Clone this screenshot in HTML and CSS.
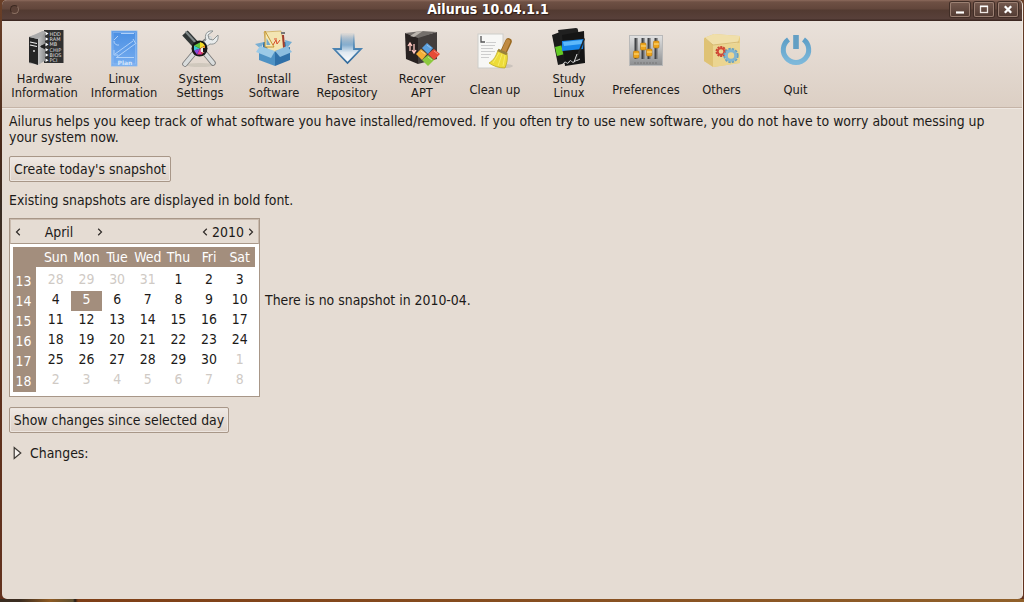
FILE: index.html
```html
<!DOCTYPE html>
<html lang="en">
<head>
<meta charset="utf-8">
<title>Ailurus 10.04.1.1</title>
<link rel="stylesheet" href="styles.css">
</head>
<body>
<main class="window">
  <header class="titlebar">
    <span class="knob"></span>
    <h1 class="title">Ailurus 10.04.1.1</h1>
    <div class="controls">
      <span class="control"><svg width="20" height="15"><path d="M6 10.500h8" stroke="#fff" stroke-width="2.200"/></svg></span>
      <span class="control"><svg width="20" height="15"><rect x="6.500" y="4.500" width="7" height="6" fill="none" stroke="#eee8e4" stroke-width="1.300"/><path d="M6 4.300h8" stroke="#fff" stroke-width="1.500"/></svg></span>
      <span class="control"><svg width="20" height="15"><path d="M6.800 4.300l6.400 6.400M13.200 4.300l-6.400 6.400" stroke="#fff" stroke-width="2.300"/></svg></span>
    </div>
  </header>
  <nav class="toolbar">
    <div class="tool">
      <svg class="icon" viewBox="0 0 40 42">
        <defs><linearGradient id="tower" x2="1"><stop stop-color="#777"/><stop offset=".35" stop-color="#ddd"/><stop offset="1" stop-color="#888"/></linearGradient></defs>
        <rect x="19" y="2" width="19.500" height="33" fill="#303030"/>
        <path d="M4 9l14-6 3 1v28l-8 5-9-2z" fill="url(#tower)"/>
        <path d="M4 9l9 2v26l-9-3z" fill="#252525"/><path d="M4 9l14-6 3 1-8 7z" fill="#aaa"/>
        <path d="M5 14l7 1.500M5 17l7 1.500" stroke="#eee" stroke-width="1.200"/><circle cx="9" cy="23" r="1" fill="#ddd"/>
        <path d="M21 5v28M16 18.500h6" stroke="#333" stroke-width="2"/><path d="M15 18.500l5-3v6z" fill="#222"/>
        <path d="M20.500 3.800l3 1.800-3 1.800zM20.500 9.200l3 1.800-3 1.800zM20.500 14.600l3 1.800-3 1.800zM20.500 20l3 1.800-3 1.800zM20.500 25.200l3 1.800-3 1.800zM20.500 30.500l3 1.800-3 1.800z" fill="#fff"/>
        <g class="parts"><text x="24.500" y="7.600">HDD</text><text x="24.500" y="13">RAM</text><text x="24.500" y="18.400">MB</text><text x="24.500" y="23.800">CHIP</text><text x="24.500" y="29">BIOS</text><text x="24.500" y="34.300">PCI</text></g>
      </svg>
      <span class="label">Hardware<br>Information</span>
    </div>
    <div class="tool">
      <svg class="icon" viewBox="0 0 40 42">
        <defs><linearGradient id="blueprint" x2="0" y2="1"><stop stop-color="#4a8fe3"/><stop offset="1" stop-color="#77adf0"/></linearGradient></defs>
        <rect x="7.500" y="3" width="25.500" height="35" fill="url(#blueprint)" stroke="#8bbaf0" stroke-width=".8"/>
        <g fill="none" stroke="#b9d7fa" stroke-width=".9"><path d="M17 5.500h13M10 12l4-4M10 13a4 4 0 0 0 5 4M11 26l18-13M13 29l18-13M10 22v5h4M29 11l3 5M12 29.500h18"/><rect x="9" y="4.500" width="22.500" height="31.500" stroke-opacity=".4"/></g>
        <text class="proof" x="13.500" y="36.500">Plan</text>
      </svg>
      <span class="label">Linux<br>Information</span>
    </div>
    <div class="tool">
      <svg class="icon" viewBox="0 0 40 42">
        <ellipse cx="20" cy="37" rx="14" ry="2" fill="#998" opacity=".25"/>
        <path d="M5 36L15 24M25 14l4-3" stroke="#777" stroke-width="5.500" stroke-linecap="round"/><path d="M5 36L15 24M25 15l5-5" stroke="#d9dcdc" stroke-width="4" stroke-linecap="round"/>
        <path d="M33 3c-6-1-9 4-7 9l-4 3 4 4 4-3c5 1 9-3 8-9l-5 5-4-1-1-4z" fill="#e9ecec" stroke="#858a8a" stroke-width=".9"/>
        <path d="M24 24l9 11" stroke="#777" stroke-width="5.500" stroke-linecap="round"/><path d="M24 24l9 11" stroke="#d9dcdc" stroke-width="3.800" stroke-linecap="round"/>
        <path d="M5 5l12 13" stroke="#303535" stroke-width="7.500"/><path d="M5.500 3.500l11 12" stroke="#828a8a" stroke-width="2"/>
        <circle cx="19.500" cy="20.500" r="8" fill="#171717"/>
        <path d="M20 20.500v-6.500a7 7 0 0 1 5 3.500z" fill="#f4dc28"/><path d="M20 20.500l5-3v5z" fill="#f28c1c"/><path d="M20 20.500l5 2-3 4z" fill="#e53b34"/><path d="M20 20.500l2 6h-5z" fill="#e63a9c"/><path d="M20 20.500l-3 6-3-4z" fill="#8a4bdd"/><path d="M20 20.500l-6 2v-5z" fill="#3dc4d6"/><path d="M20 20.500l-6-3 6-3z" fill="#62c83c"/><circle cx="23" cy="22" r="2.500" fill="#eee"/><path d="M23 20h4v4h-4z" fill="#171717"/>
      </svg>
      <span class="label">System<br>Settings</span>
    </div>
    <div class="tool">
      <svg class="icon" viewBox="0 0 40 42">
        <path d="M9 14h23v12H9z" fill="#3476ac"/><path d="M10 4l17-1 4 18-17 4z" fill="#f3e5b2" stroke="#caa650" stroke-width=".7"/><path d="M11 3l9 16H11z" fill="#f7e9b5" stroke="#c49635"/><path d="M12.500 10l4 7h-4z" fill="#75a9ca"/>
        <path d="M19 17l3-5 1 4 3-4M20 11h3" stroke="#d84b2a" stroke-width="1" fill="none"/><path d="M29 7l1 13" stroke="#a33c2c" stroke-width="2"/><path d="M27 5h4" stroke="#777" stroke-width="2"/>
        <path d="M5 20l16 4v14L5 32z" fill="#4e92c4"/><path d="M21 24l15-5v13l-15 6z" fill="#2f70a8"/><path d="M7 20l3-6-9 2 6 5z" fill="#79afd3"/><path d="M6 18l15 5-4 7-15-6z" fill="#9bcae7"/><path d="M21 23l12-5 5 6-12 5z" fill="#8bbddf"/><path d="M32 18l-1-6 7 2-4 5z" fill="#72abd1"/>
      </svg>
      <span class="label">Install<br>Software</span>
    </div>
    <div class="tool">
      <svg class="icon" viewBox="0 0 40 42">
        <defs><linearGradient id="down" x2="0" y2="1"><stop stop-color="#4f89ba" stop-opacity="0"/><stop offset=".4" stop-color="#86aecf"/><stop offset=".65" stop-color="#e0e9f1"/><stop offset="1" stop-color="#fff"/></linearGradient><linearGradient id="edge" x2="0" y2="1"><stop stop-color="#397caf" stop-opacity="0"/><stop offset=".5" stop-color="#4d85b3"/><stop offset="1" stop-color="#326a9b"/></linearGradient></defs>
        <path d="M14 5h13v16h7L20.500 35 7 21h7z" fill="url(#down)" stroke="url(#edge)" stroke-width="1.800"/>
      </svg>
      <span class="label">Fastest<br>Repository</span>
    </div>
    <div class="tool">
      <svg class="icon" viewBox="0 0 40 42">
        <path d="M3 5l13 4v27L4 31z" fill="#282221"/><path d="M16 9l19-5v27l-19 5z" fill="#433e3c"/><path d="M3 5l17-2 15 1-19 6z" fill="#746f6b"/><path d="M15 3.500l6-.5-9 6-4-1z" fill="#bbb5ae"/>
        <path d="M8 23v-8m-2 3l2-3 2 3M12 16v9m-2-3l2 3 2-3" fill="none" stroke="#ffc8c1" stroke-width="1.300"/>
        <path d="M25 15l6 5-5 6-6-6z" fill="#5ba0dd"/><path d="M19 21l6 5-5 6-6-6z" fill="#f3ae36"/><path d="M32 21l6 5-6 6-6-6z" fill="#e64b36"/><path d="M26 27l6 5-6 6-6-6z" fill="#8cc83d"/><path d="M25 17l4 3M19 23l4 3M32 23l4 3M26 29l4 3" stroke="#fff" opacity=".4"/>
      </svg>
      <span class="label">Recover<br>APT</span>
    </div>
    <div class="tool single">
      <svg class="icon" viewBox="0 0 40 42">
        <rect x="3" y="6" width="25" height="34" fill="#f7f7f5" stroke="#cecdca"/><path d="M6 8v6h4" fill="none" stroke="#555" stroke-width="1.300"/><path d="M11 14.500h10M6 17.500h14M6 20.500h12M6 23.500h14M6 26.500h10M6 29.500h8" stroke="#cdcdcd"/>
        <ellipse cx="29" cy="38" rx="9" ry="2" fill="#888" opacity=".25"/><path d="M33.500 13.500L29 23" stroke="#98681f" stroke-width="6.500" stroke-linecap="round"/><path d="M33 13.500l-4 9" stroke="#c08a42" stroke-width="4.500" stroke-linecap="round"/>
        <path d="M23 22l9 3c1 6 0 10-2 15-6 0-12-2-16-5 5-3 7-7 9-13z" fill="#eddc39" stroke="#b8a220" stroke-width=".7"/><path d="M24 25l-6 10M27 26l-4 12M30 27l-2 11" stroke="#f7eb66"/><path d="M23 22l9 4" stroke="#99813b" stroke-width="2.500"/>
      </svg>
      <span class="label">Clean up</span>
    </div>
    <div class="tool">
      <svg class="icon" viewBox="0 0 40 42">
        <path d="M3 7l8-3 6 31-8 2z" fill="#1a1a1a"/><path d="M6 19l8-2 2 9-8 2z" fill="#64cb24"/><path d="M9 2l18-2q2 0 2 2l4 27-17 5z" fill="#202020"/><path d="M13 7l22-4 1 32-20 3z" fill="#151515"/><path d="M13 13l22-2-1 10-21 2z" fill="#1785e8"/><path d="M14 14l19-2v4l-18 2z" fill="#5db8fa"/><path d="M35 10l1 1-8 21-2 2v-3z" fill="#252525"/><path d="M28 26l-3 8M14 36c3-5 4 2 6-2s3 2 5 0 3-1 6-3" fill="none" stroke="#ddd" stroke-width="1"/>
      </svg>
      <span class="label">Study<br>Linux</span>
    </div>
    <div class="tool single">
      <svg class="icon" viewBox="0 0 40 42">
        <defs><linearGradient id="panel" x2="0" y2="1"><stop stop-color="#e2e2e2"/><stop offset="1" stop-color="#8c8e90"/></linearGradient></defs>
        <rect x="3.500" y="7.500" width="33" height="30" fill="url(#panel)" stroke="#b9b9b9"/><path d="M10 10v21M17 10v21M23 10v21M30 10v21" stroke="#414346" stroke-width="3"/><path d="M11 10v21M18 10v21M24 10v21M31 10v21" stroke="#aaa" stroke-width=".8"/>
        <g fill="#efa51c" stroke="#b4750e" stroke-width=".6"><rect x="7.500" y="23" width="5.500" height="7" rx="1"/><rect x="14.500" y="15" width="5.500" height="7" rx="1"/><rect x="20.500" y="21" width="5.500" height="7" rx="1"/><rect x="27.500" y="13" width="5.500" height="7" rx="1"/></g><path d="M8 26h5M15 18h5M21 24h5M28 16h5" stroke="#ffe188"/><path d="M8 35h24" stroke="#777" stroke-dasharray="2 1"/>
      </svg>
      <span class="label">Preferences</span>
    </div>
    <div class="tool single">
      <svg class="icon" viewBox="0 0 40 42">
        <path d="M2 10l10-4 26 2v27l-26 4-10-6z" fill="#e8cd83"/><path d="M2 10l10-4 26 2-3 8-24 2z" fill="#f0dfaa"/><path d="M2 10l9 7v22l-9-6z" fill="#dfc274"/><path d="M11 17l27-2v20l-27 4z" fill="#ebd591"/><path d="M3 10l8 7 26-3" fill="none" stroke="#cdae62" stroke-width=".7"/>
        <circle cx="19" cy="23.500" r="4.500" fill="none" stroke="#c94735" stroke-width="2" stroke-dasharray="2 .85"/><circle cx="19" cy="23.500" r="3.300" fill="none" stroke="#d44936" stroke-width="2"/>
        <circle cx="29" cy="27.500" r="6.500" fill="none" stroke="#659fbf" stroke-width="2.300" stroke-dasharray="2.400 1"/><circle cx="29" cy="27.500" r="4.700" fill="none" stroke="#80b4d0" stroke-width="3"/>
      </svg>
      <span class="label">Others</span>
    </div>
    <div class="tool single">
      <svg class="icon" viewBox="0 0 40 42">
        <defs><linearGradient id="power" x2="0" y2="1"><stop stop-color="#5e9fc7"/><stop offset="1" stop-color="#7db8da"/></linearGradient></defs>
        <path d="M12.500 11.500a12.700 12.700 0 1 0 15 0" fill="none" stroke="url(#power)" stroke-width="5"/><rect x="17.200" y="7" width="5.600" height="14" fill="#639fc4"/>
      </svg>
      <span class="label">Quit</span>
    </div>
  </nav>
  <section class="content">
    <p class="intro">Ailurus helps you keep track of what software you have installed/removed. If you often try to use new software, you do not have to worry about messing up<br>your system now.</p>
    <button class="button create">Create today's snapshot</button>
    <p class="hint">Existing snapshots are displayed in bold font.</p>
    <div class="snapshots">
      <div class="calendar">
        <div class="cal-nav">
          <svg class="chev" viewBox="0 0 6 8"><path d="M4.800.8L1.500 4l3.300 3.200"/></svg>
          <span class="month">April</span>
          <svg class="chev" viewBox="0 0 6 8"><path d="M1.200.8L4.500 4 1.200 7.200"/></svg>
          <span class="spacer"></span>
          <svg class="chev" viewBox="0 0 6 8"><path d="M4.800.8L1.500 4l3.300 3.200"/></svg>
          <span class="year">2010</span>
          <svg class="chev" viewBox="0 0 6 8"><path d="M1.200.8L4.500 4 1.200 7.200"/></svg>
        </div>
        <div class="cal-body">
          <div class="days head"><span>Sun</span><span>Mon</span><span>Tue</span><span>Wed</span><span>Thu</span><span>Fri</span><span>Sat</span></div>
          <div class="cal-main">
            <div class="weeks"><span>13</span><span>14</span><span>15</span><span>16</span><span>17</span><span>18</span></div>
            <div class="days dates">
              <span class="dim">28</span><span class="dim">29</span><span class="dim">30</span><span class="dim">31</span><span>1</span><span>2</span><span>3</span>
              <span>4</span><span class="selected">5</span><span>6</span><span>7</span><span>8</span><span>9</span><span>10</span>
              <span>11</span><span>12</span><span>13</span><span>14</span><span>15</span><span>16</span><span>17</span>
              <span>18</span><span>19</span><span>20</span><span>21</span><span>22</span><span>23</span><span>24</span>
              <span>25</span><span>26</span><span>27</span><span>28</span><span>29</span><span>30</span><span class="dim">1</span>
              <span class="dim">2</span><span class="dim">3</span><span class="dim">4</span><span class="dim">5</span><span class="dim">6</span><span class="dim">7</span><span class="dim">8</span>
            </div>
          </div>
        </div>
      </div>
      <p class="status">There is no snapshot in 2010-04.</p>
    </div>
    <button class="button show">Show changes since selected day</button>
    <div class="expander"><svg width="9" height="14" viewBox="0 0 9 14"><path d="M1.200 1.500v11L7.800 7z" fill="#f6f2ee" stroke="#3c3834" stroke-width="1.200"/></svg><span>Changes:</span></div>
  </section>
</main>
</body>
</html>
```
FILE: styles.css
```css
* { box-sizing: border-box; }
body {
  margin: 0;
  width: 1024px;
  height: 602px;
  overflow: hidden;
  padding: 0 1px 3px 2px;
  background:
    linear-gradient(90deg, #3a2c20 0 20px, #8e5a22 50px, #5e5030 73px, #221c18 75px, #7e3e16 78px, #90602a) 0 599px / 100% 3px no-repeat,
    linear-gradient(#6b4028, #48291a 25%, #392d24 35%, #5d301c 60%, #63321e);
  font: 13.9px/16px "DejaVu Sans Condensed", "DejaVu Sans", sans-serif;
  font-stretch: condensed;
  color: #1c1a18;
}
p, h1 { margin: 0; }
.window {
  height: 599px;
  display: flex;
  flex-direction: column;
  background: #e5dcd3;
  border-radius: 5px;
  border-right: 1px solid #f0e9e2;
  overflow: hidden;
}
.titlebar {
  height: 21px;
  display: grid;
  grid-template-columns: 80px 1fr 80px;
  margin-right: -1px;
  background: linear-gradient(#8c6a5c 0, #6e5044 2px, #62463b 9px, #523a31 10px, #58403a 19px, #3c2822 20px);
}
.knob {
  width: 9px;
  height: 9px;
  margin: 5px 0 0 8px;
  border-radius: 50%;
  background: #5a4036;
  border: 1px solid #3c2922;
  border-right-color: #8b7063;
  border-bottom-color: #8b7063;
}
.title {
  padding-right: 49px;
  font-size: 14px;
  line-height: 18px;
  text-align: center;
  color: #fff;
  text-shadow: 1px 1px 1px #2c1c16;
}
.controls { display: flex; gap: 4px; padding: 2px 0 0 7px; }
.control {
  width: 20px;
  height: 15px;
  border-radius: 2px;
  background: linear-gradient(#755a4f, #523b33);
  box-shadow: inset 0 0 0 1px #9b8073, 0 0 0 1px #402d26;
}
.control svg { display: block; }
.toolbar {
  height: 87px;
  padding: 7px 0 0 4px;
  display: flex;
  background: linear-gradient(#e9e1da, #dccfc4);
  border-bottom: 1px solid #c5b4a7;
  box-shadow: 0 1px #efe8e2;
}
.tool {
  display: flex;
  flex-direction: column;
  align-items: center;
  flex: none;
}
.icon { width: 40px; height: 42px; display: block; }
.label {
  margin-top: 2px;
  font-size: 12.75px;
  line-height: 14px;
  text-align: center;
  white-space: nowrap;
}
.single .label { margin-top: 13px; }
.tool:nth-child(1) { width: 77px; }
.tool:nth-child(2) { width: 82px; }
.tool:nth-child(3) { width: 70px; }
.tool:nth-child(4) { width: 78px; }
.tool:nth-child(5) { width: 68px; }
.tool:nth-child(6) { width: 82px; }
.tool:nth-child(7) { width: 64px; }
.tool:nth-child(8) { width: 84px; }
.tool:nth-child(9) { width: 70px; }
.tool:nth-child(10) { width: 81px; }
.tool:nth-child(11) { width: 67px; }
.parts { font: 5px "DejaVu Sans", sans-serif; fill: #ddd; }
.proof { font: bold 6px "DejaVu Sans", sans-serif; fill: #d5e6fb; }
.content {
  flex: 1;
  display: flex;
  flex-direction: column;
  align-items: flex-start;
  padding: 5px 6px 0 7px;
}
.intro { white-space: nowrap; }
.button {
  height: 26px;
  padding: 0;
  border: 1px solid #a89788;
  border-radius: 2px;
  background: linear-gradient(#efe9e4, #ddd1c7);
  box-shadow: inset 0 0 0 1px #ede6e0;
  font: inherit;
  color: inherit;
  white-space: nowrap;
}
.create { width: 162px; margin-top: 11px; }
.hint { margin-top: 10px; }
.snapshots { display: flex; align-items: center; gap: 5px; margin-top: 10px; }
.status { margin-bottom: 16px; }
.calendar {
  width: 251px;
  height: 179px;
  border: 1px solid #a89788;
  background: #fff;
}
.cal-nav {
  height: 25px;
  display: flex;
  align-items: center;
  padding: 0 4px 0 4px;
  background: #e5dcd3;
  border: 1px solid #cabbae;
  border-bottom-color: #a89788;
}
.chev { width: 6px; height: 8px; fill: none; stroke: #302b28; stroke-width: 1.2; }
.month { width: 76px; text-align: center; }
.spacer { flex: 1; }
.year { width: 40px; text-align: center; }
.cal-body { padding: 3px 4px 0 3px; }
.days { display: grid; grid-template-columns: repeat(7, 1fr); text-align: center; }
.head {
  height: 20px;
  padding-left: 27.5px;
  line-height: 20px;
  background: #a38e7d;
  color: #fff;
}
.cal-main { display: flex; }
.weeks {
  width: 23px;
  height: 125px;
  padding-top: 4px;
  display: flex;
  flex-direction: column;
  background: #a38e7d;
  color: #fff;
  line-height: 20px;
  text-align: center;
}
.weeks span { padding-right: 2px; }
.dates { flex: 1; padding: 4px 0 0 4.5px; grid-auto-rows: 20px; line-height: 16px; }
.dim { color: #cfcac5; }
.selected { background: #a38e7d; color: #fff; }
.show { width: 220px; margin-top: 10px; }
.expander { display: flex; align-items: center; gap: 8px; padding-left: 4px; margin-top: 12px; }
```
